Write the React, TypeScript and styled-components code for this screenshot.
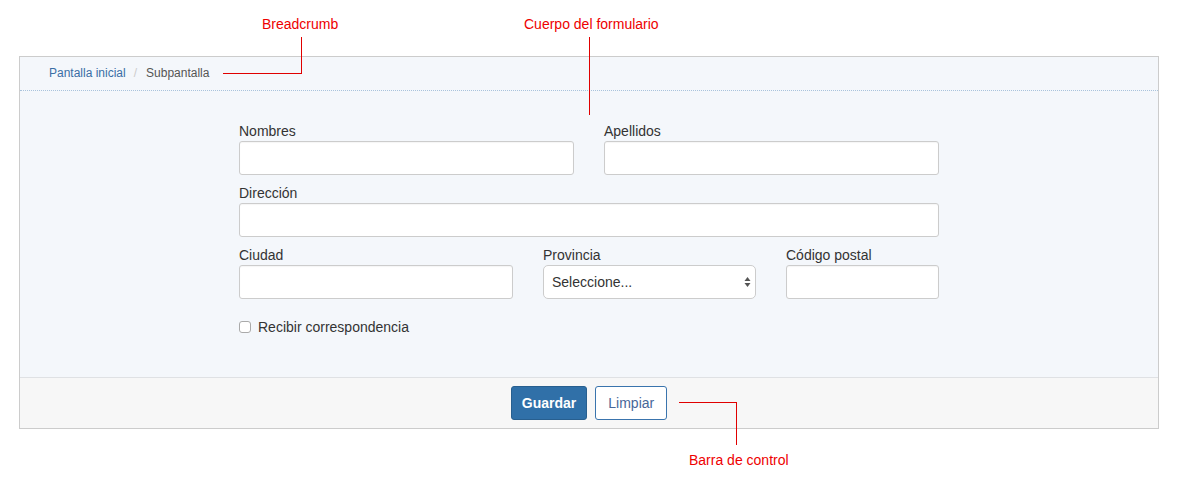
import styled, { createGlobalStyle } from "styled-components";

const GlobalStyle = createGlobalStyle`
  html, body {
    margin: 0;
    padding: 0;
    background: #fff;
    font-family: "Liberation Sans", Arial, sans-serif;
    color: #333;
  }
  * { box-sizing: border-box; }
`;

const Page = styled.div`
  position: relative;
  width: 1178px;
  height: 483px;
  padding: 56px 19px 0;
`;

const Panel = styled.div`
  border: 1px solid #ccc;
  background: #f4f7fb;
`;

const Breadcrumb = styled.ol`
  display: flex;
  align-items: center;
  height: 34px;
  margin: 0;
  padding: 0 0 1px 29px;
  list-style: none;
  font-size: 12px;
  border-bottom: 1px dotted #a9c3dc;
`;

const Crumb = styled.li<{ $active?: boolean }>`
  color: ${({ $active }) => ($active ? "#555" : "#3a6ea5")};
`;

const Divider = styled.li`
  color: #ccc;
  padding: 0 9px 0 8px;
`;

const Body = styled.div`
  padding: 30px 0 30px;
  display: flex;
  justify-content: center;
`;

const Form = styled.div`
  width: 700px;
`;

const Row = styled.div<{ $cols: string }>`
  display: grid;
  grid-template-columns: ${({ $cols }) => $cols};
  column-gap: 30px;
`;

const Group = styled.div`
  margin-bottom: 8px;
`;

const Label = styled.label`
  display: block;
  font-size: 14px;
  line-height: 20px;
  color: #333;
`;

const Input = styled.input`
  display: block;
  width: 100%;
  height: 34px;
  border: 1px solid #ccc;
  border-radius: 3px;
  background: #fff;
  font: inherit;
  font-size: 14px;
  padding: 6px 8px;
  box-shadow: inset 0 1px 1px rgba(0, 0, 0, 0.04);
`;

const SelectWrap = styled.div`
  position: relative;
`;

const Select = styled.select`
  display: block;
  width: 100%;
  height: 34px;
  appearance: none;
  border: 1px solid #ccc;
  border-radius: 5px;
  background: #fff;
  font-family: "Liberation Sans", Arial, sans-serif;
  font-size: 14px;
  color: #333;
  padding: 0 24px 0 8px;
`;

const Arrows = styled.svg`
  position: absolute;
  right: 5px;
  top: 11px;
  pointer-events: none;
`;

const CheckRow = styled.label`
  display: flex;
  align-items: center;
  gap: 7px;
  margin: 10px 0 10px;
  height: 20px;
  font-size: 14px;
  color: #333;
`;

const Check = styled.input`
  appearance: none;
  margin: 0;
  width: 12px;
  height: 12px;
  border: 1px solid #aaa;
  border-radius: 3px;
  background: #fff;
`;

const Footer = styled.div`
  display: flex;
  justify-content: center;
  gap: 8px;
  padding: 8px 0;
  background: #f7f7f7;
  border-top: 1px solid #dfe1e4;
`;

const Button = styled.button<{ $primary?: boolean }>`
  height: 34px;
  padding: ${({ $primary }) => ($primary ? "0 10px" : "0 12px")};
  border-radius: 3px;
  font-family: "Liberation Sans", Arial, sans-serif;
  font-size: 14px;
  font-weight: ${({ $primary }) => ($primary ? 700 : 400)};
  border: 1px solid ${({ $primary }) => ($primary ? "#285f8f" : "#3a74ad")};
  background: ${({ $primary }) => ($primary ? "#3070a8" : "#fff")};
  color: ${({ $primary }) => ($primary ? "#fff" : "#476799")};
`;

/* annotations drawn over the mockup */
const Note = styled.span<{ $x: number; $y: number }>`
  position: absolute;
  left: ${({ $x }) => $x}px;
  top: ${({ $y }) => $y}px;
  font-family: "Liberation Sans", Arial, sans-serif;
  font-size: 14px;
  line-height: 16px;
  color: #ee0000;
  white-space: nowrap;
`;

const Line = styled.div<{ $x: number; $y: number; $w: number; $h: number }>`
  position: absolute;
  left: ${({ $x }) => $x}px;
  top: ${({ $y }) => $y}px;
  width: ${({ $w }) => $w}px;
  height: ${({ $h }) => $h}px;
  background: #e00000;
`;

const App = () => {
  return (
    <Page>
      <GlobalStyle />
      <Panel>
        <Breadcrumb>
          <Crumb>Pantalla inicial</Crumb>
          <Divider>/</Divider>
          <Crumb $active>Subpantalla</Crumb>
        </Breadcrumb>

        <Body>
          <Form>
            <Row $cols="1fr 1fr">
              <Group>
                <Label>Nombres</Label>
                <Input />
              </Group>
              <Group>
                <Label>Apellidos</Label>
                <Input />
              </Group>
            </Row>
            <Row $cols="1fr">
              <Group>
                <Label>Dirección</Label>
                <Input />
              </Group>
            </Row>
            <Row $cols="274px 213px 1fr">
              <Group>
                <Label>Ciudad</Label>
                <Input />
              </Group>
              <Group>
                <Label>Provincia</Label>
                <SelectWrap>
                  <Select defaultValue="">
                    <option value="">Seleccione...</option>
                  </Select>
                  <Arrows width="7" height="12" viewBox="0 0 7 12">
                    <path d="M3.5 1 L6.5 5 L0.5 5 Z" fill="#555" />
                    <path d="M3.5 11 L6.5 7 L0.5 7 Z" fill="#555" />
                  </Arrows>
                </SelectWrap>
              </Group>
              <Group>
                <Label>Código postal</Label>
                <Input />
              </Group>
            </Row>
            <CheckRow>
              <Check type="checkbox" />
              Recibir correspondencia
            </CheckRow>
          </Form>
        </Body>

        <Footer>
          <Button $primary>Guardar</Button>
          <Button>Limpiar</Button>
        </Footer>
      </Panel>

      {/* NOTE ANNOTATIONS */}
      <Note $x={262} $y={16}>Breadcrumb</Note>
      <Line $x={301} $y={37} $w={1} $h={37} />
      <Line $x={223} $y={73} $w={79} $h={1} />

      <Note $x={524} $y={16}>Cuerpo del formulario</Note>
      <Line $x={589} $y={37} $w={1} $h={78} />

      <Line $x={679} $y={402} $w={58} $h={1} />
      <Line $x={736} $y={402} $w={1} $h={43} />
      <Note $x={689} $y={452}>Barra de control</Note>
    </Page>
  );
};

export default App;
